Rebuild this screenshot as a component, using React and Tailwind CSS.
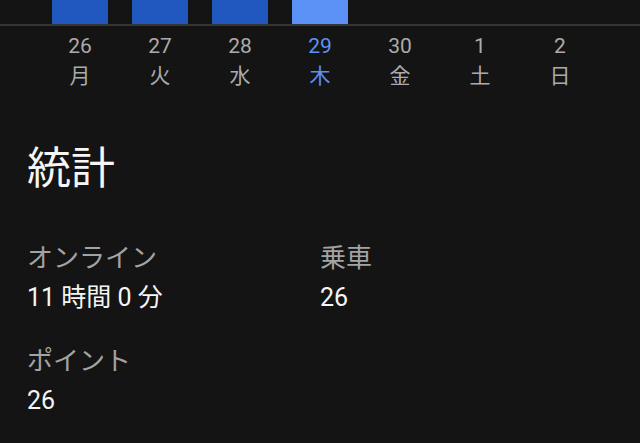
const days = [
  { n: "26", d: "月", bar: "bg-[#2058c0]" },
  { n: "27", d: "火", bar: "bg-[#2058c0]" },
  { n: "28", d: "水", bar: "bg-[#2058c0]" },
  { n: "29", d: "木", bar: "bg-[#5c91f5]", active: true },
  { n: "30", d: "金" },
  { n: "1", d: "土" },
  { n: "2", d: "日" },
];

const stats = [
  { label: "オンライン", value: "11 時間 0 分" },
  { label: "乗車", value: "26" },
  { label: "ポイント", value: "26" },
];

export default function App() {
  return (
    <div
      className="w-[640px] h-[443px] overflow-hidden bg-[#141414] text-[#f5f5f5]"
      style={{ fontFamily: 'Roboto, "Noto Sans CJK JP", sans-serif' }}
    >
      {/* chart bars */}
      <div className="flex pl-[40px] h-[26px] border-b-2 border-[#353535]">
        {days.map((day) => (
          <div key={day.n} className="w-[80px] flex justify-center">
            {day.bar && <div className={`w-[56px] h-full ${day.bar}`} />}
          </div>
        ))}
      </div>

      {/* day labels */}
      <div className="flex pl-[40px] pt-[5px]">
        {days.map((day) => (
          <div
            key={day.n}
            className={
              "w-[80px] flex flex-col items-center text-[21px] leading-[30px] " +
              (day.active ? "text-[#5c91f5]" : "text-[#ababab]")
            }
          >
            <span>{day.n}</span>
            <span>{day.d}</span>
          </div>
        ))}
      </div>

      <div className="px-[27px]">
        <h2 className="mt-[56px] text-[44px] leading-[44px] font-normal">統計</h2>

        <div className="mt-[47px] grid grid-cols-2 gap-y-[23px]">
          {stats.map((s) => (
            <div key={s.label} className="leading-[40px]">
              <div className="text-[26px] text-[#a3a3a3]">{s.label}</div>
              <div className="text-[25px]">{s.value}</div>
            </div>
          ))}
        </div>
      </div>
    </div>
  );
}
